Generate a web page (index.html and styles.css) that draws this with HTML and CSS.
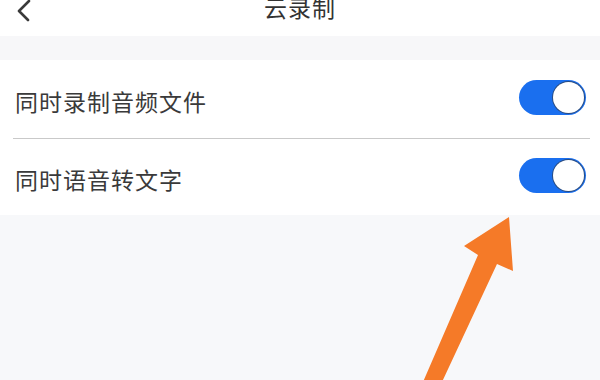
FILE: index.html
```html
<!DOCTYPE html>
<html lang="zh">
<head>
<meta charset="utf-8">
<link rel="stylesheet" href="styles.css">
</head>
<body>
<div class="page">
  <header class="header">
    <svg class="back" width="20" height="24" viewBox="0 0 20 24"><polyline points="12,1 2,11 11,20" fill="none" stroke="#3a3a3a" stroke-width="2.6" stroke-linecap="round" stroke-linejoin="round"/></svg>
    <div class="title">云录制</div>
  </header>
  <div class="band"></div>
  <div class="card">
    <div class="row row1">
      <span class="label">同时录制音频文件</span>
      <span class="toggle"><span class="knob"></span></span>
    </div>
    <div class="divider"></div>
    <div class="row row2">
      <span class="label">同时语音转文字</span>
      <span class="toggle"><span class="knob"></span></span>
    </div>
  </div>
  <svg class="arrow" width="600" height="380" viewBox="0 0 600 380"><polygon points="509,217 513,271 497,264 442,382 423,382 478,255 464,246" fill="#f57a28"/></svg>
</div>
</body>
</html>
```
FILE: styles.css
```css
* { box-sizing: border-box; }
html, body { margin: 0; padding: 0; }
body {
  width: 600px;
  height: 380px;
  overflow: hidden;
  background: #f7f8fa;
  font-family: "Noto Sans CJK SC", "Noto Sans", sans-serif;
  color: #333;
}
.page { position: relative; width: 600px; height: 380px; }
.header {
  height: 36px;
  background: #fff;
  position: relative;
  display: flex;
  justify-content: center;
  align-items: flex-start;
}
.back { position: absolute; left: 17px; top: 0; }
.title {
  font-size: 23px;
  line-height: 24px;
  margin-top: -5px;
  letter-spacing: 1px;
  color: #333;
}
.band { height: 24px; background: #f7f7f9; }
.card { background: #fff; }
.row {
  display: flex;
  align-items: center;
  justify-content: space-between;
  padding: 0 14px 0 15px;
}
.row1 { height: 78px; }
.row2 { height: 76px; }
.label {
  font-size: 23px;
  letter-spacing: 1px;
  line-height: 30px;
  margin-top: 4px;
  color: #3a3a3a;
}
.divider {
  height: 1px;
  background: #c9c9c9;
  margin: 0 10px 0 13px;
}
.toggle {
  width: 67px;
  height: 35px;
  border-radius: 18px;
  background: #1a6fef;
  display: flex;
  justify-content: flex-end;
  align-items: center;
  padding-right: 2px;
  margin-bottom: 4px;
}
.knob {
  width: 31px;
  height: 31px;
  border-radius: 50%;
  background: #fff;
  box-shadow: 0 0 0 1px #2a4c80;
}
.arrow { position: absolute; left: 0; top: 0; }
```
